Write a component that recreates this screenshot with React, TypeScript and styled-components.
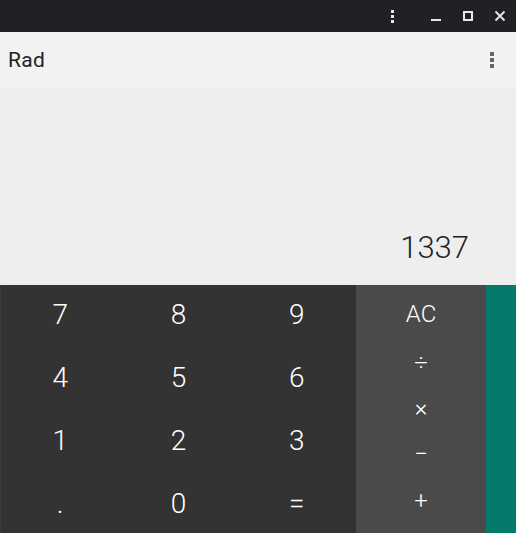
import React from 'react';
import styled, { createGlobalStyle } from 'styled-components';

const GlobalStyle = createGlobalStyle`
  html, body { margin: 0; padding: 0; }
  body { font-family: Roboto, "Noto Sans", sans-serif; background: #333; }
`;

const Window = styled.div`
  width: 516px;
  height: 533px;
  display: flex;
  flex-direction: column;
  overflow: hidden;
`;

const TitleBar = styled.div`
  height: 32px;
  flex-shrink: 0;
  background: #202124;
  display: flex;
  align-items: center;
  justify-content: flex-end;
`;

const TitleButton = styled.div<{ $gap?: number }>`
  width: 32px;
  height: 32px;
  margin-right: ${p => p.$gap ?? 0}px;
  display: flex;
  align-items: center;
  justify-content: center;
`;

const Toolbar = styled.div`
  height: 56px;
  flex-shrink: 0;
  background: #f2f2f2;
  display: flex;
  align-items: center;
  justify-content: space-between;
  padding: 0 22px 0 8px;
`;

const Mode = styled.div`
  font-size: 21px;
  font-weight: 400;
  letter-spacing: 0.3px;
  color: #222;
`;

const Display = styled.div`
  flex: 1;
  background: #eeeeee;
  display: flex;
  align-items: flex-end;
  justify-content: flex-end;
  padding: 0 47px 19px 0;
`;

const Result = styled.div`
  font-size: 31px;
  font-weight: 300;
  color: #222;
`;

const Keypad = styled.div`
  height: 248px;
  flex-shrink: 0;
  display: flex;
`;

const Digits = styled.div`
  width: 356px;
  background: #333333;
  border-left: 1px solid #3a3a3a;
  box-sizing: border-box;
  overflow: hidden;
  display: grid;
  grid-template-columns: repeat(3, 1fr);
  grid-template-rows: repeat(4, 63px);
`;

const Ops = styled.div`
  width: 130px;
  background: #4a4a4a;
  display: grid;
  grid-template-rows: repeat(5, 1fr);
  padding: 8px 0;
  box-sizing: border-box;
`;

const Drawer = styled.div`
  flex: 1;
  background: #047a6a;
`;

const Key = styled.div<{ $size?: number; $lift?: number }>`
  display: flex;
  align-items: center;
  justify-content: center;
  color: #fff;
  font-size: ${p => p.$size ?? 28}px;
  font-weight: 300;
  padding-bottom: ${p => p.$lift ?? 5}px;
`;

const Dots = ({ color, size }: { color: string; size: number }) => (
  <svg width={size} height={size * 3 + 4} viewBox={`0 0 ${size} ${size * 3 + 4}`}>
    <rect x="0" y="0" width={size} height={size} fill={color} />
    <rect x="0" y={size + 2} width={size} height={size} fill={color} />
    <rect x="0" y={size * 2 + 4} width={size} height={size} fill={color} />
  </svg>
);

export default function App() {
  const digits = ['7', '8', '9', '4', '5', '6', '1', '2', '3', '.', '0', '='];
  const ops = ['AC', '÷', '×', '−', '+'];

  return (
    <Window>
      <GlobalStyle />
      <TitleBar>
        <TitleButton $gap={12}>
          <Dots color="#e8e8e8" size={3} />
        </TitleButton>
        <TitleButton>
          <svg width="12" height="12" viewBox="0 0 12 12">
            <rect x="1" y="9" width="10" height="2" fill="#e8e8e8" />
          </svg>
        </TitleButton>
        <TitleButton>
          <svg width="12" height="12" viewBox="0 0 12 12">
            <rect x="2" y="2" width="8" height="8" fill="none" stroke="#e8e8e8" strokeWidth="2" />
          </svg>
        </TitleButton>
        <TitleButton>
          <svg width="12" height="12" viewBox="0 0 12 12">
            <path d="M1.5 1.5 L10.5 10.5 M10.5 1.5 L1.5 10.5" stroke="#e8e8e8" strokeWidth="1.8" />
          </svg>
        </TitleButton>
      </TitleBar>
      <Toolbar>
        <Mode>Rad</Mode>
        <Dots color="#666" size={4} />
      </Toolbar>
      <Display>
        <Result>1337</Result>
      </Display>
      <Keypad>
        <Digits>
          {digits.map(d => <Key key={d}>{d}</Key>)}
        </Digits>
        <Ops>
          {ops.map(o => (
            <Key key={o} $size={24} $lift={o === 'AC' ? 4 : 2}>{o}</Key>
          ))}
        </Ops>
        <Drawer />
      </Keypad>
    </Window>
  );
}
